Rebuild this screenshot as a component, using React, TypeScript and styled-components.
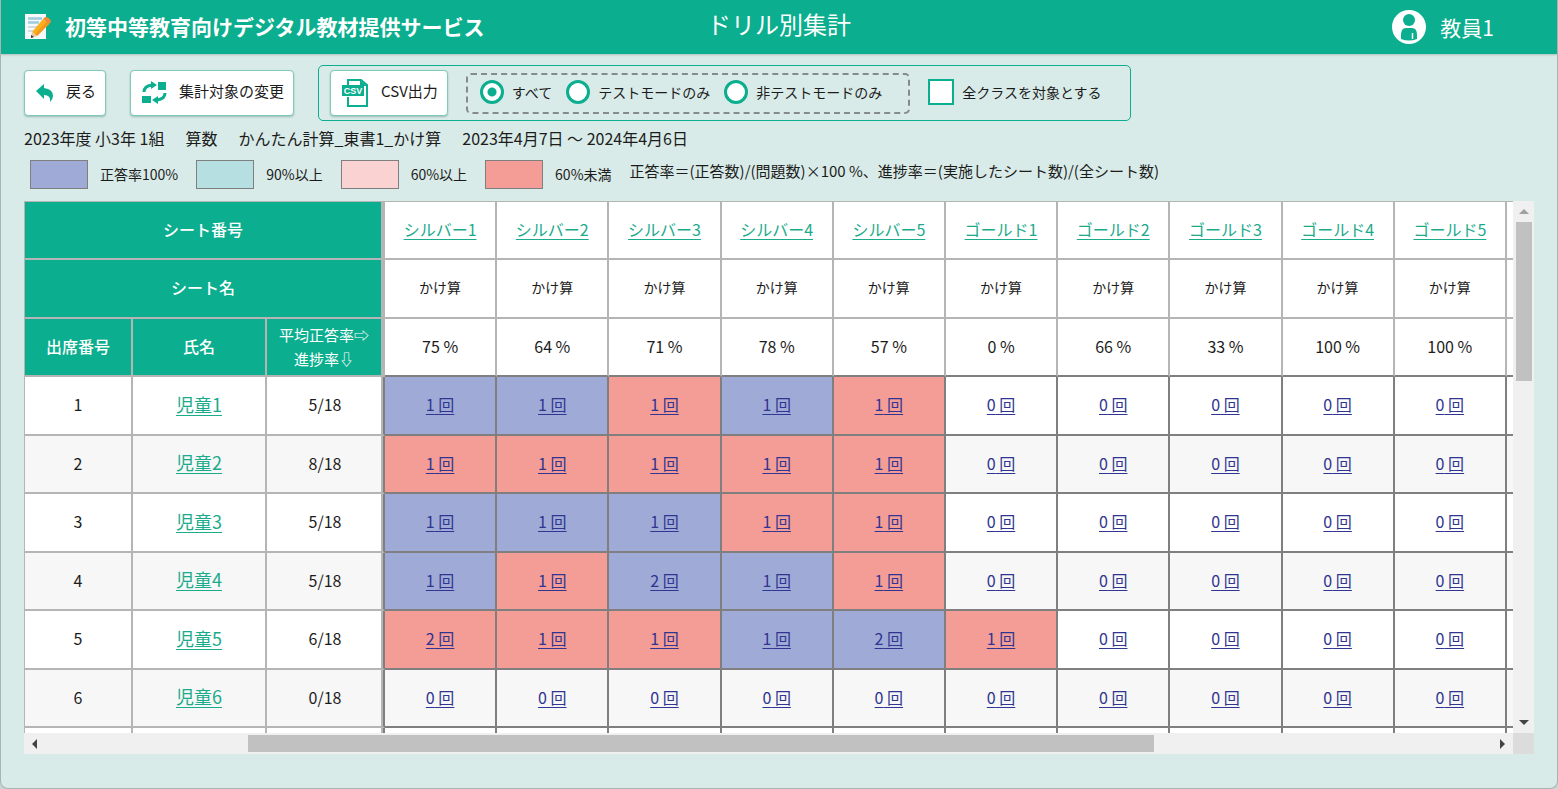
import React from "react";
import styled, { createGlobalStyle, css } from "styled-components";

const green = "#0bae8e";
const light = "#b5b5b5";
const dark = "#7f7f7f";

const Global = createGlobalStyle`
  *, *::before, *::after { box-sizing: border-box; }
  html, body { margin: 0; }
  body {
    background: #c9d6d4;
    color: #1c1c1c;
    font-family: "Noto Sans CJK JP", sans-serif;
    font-size: 16px;
    line-height: 24px;
  }
  button, input { font: inherit; color: inherit; margin: 0; }
`;

const Page = styled.div`
  height: 100vh;
  min-height: 480px;
  display: flex;
  flex-direction: column;
  background: #d9ebe8;
  border: 1px solid #a9b3b0;
  border-top: 0;
  border-radius: 0 0 8px 8px;
  overflow: hidden;
`;

const Header = styled.header`
  flex: none;
  height: 54px;
  display: grid;
  grid-template-columns: 1fr auto 1fr;
  align-items: center;
  background: ${green};
  color: #fff;
  box-shadow: 0 1px 2px rgba(0, 0, 0, 0.2);
`;

const Brand = styled.div`
  display: flex;
  align-items: center;
  gap: 14px;
  padding: 0 0 2px 23px;
  font-size: 21px;
  font-weight: 700;
  white-space: nowrap;
`;

const PageTitle = styled.h1`
  margin: 0 0 6px;
  font-size: 24px;
  line-height: 32px;
  font-weight: 400;
`;

const User = styled.div`
  justify-self: end;
  display: flex;
  align-items: center;
  gap: 14px;
  padding-right: 63px;
  font-size: 21px;
`;

const Main = styled.main`
  flex: 1;
  min-height: 0;
  display: flex;
  flex-direction: column;
  padding: 11px 23px 34px;
`;

const Toolbar = styled.div`
  display: flex;
  align-items: center;
  gap: 24px;
  font-size: 15px;
`;

const ToolButton = styled.button`
  display: flex;
  align-items: center;
  gap: 12px;
  height: 46px;
  padding: 0 9px 0 11px;
  background: #fff;
  border: 1px solid #7fcab9;
  border-radius: 4px;
  box-shadow: 0 1px 2px rgba(0, 80, 60, 0.3);
  white-space: nowrap;
`;

const ButtonLabel = styled.span`
  padding-bottom: 4px;
`;

const ExportGroup = styled.div`
  display: flex;
  align-items: center;
  gap: 18px;
  height: 56px;
  padding: 0 28px 0 11px;
  border: 1px solid ${green};
  border-radius: 5px;
`;

const ModeGroup = styled.div`
  display: flex;
  align-items: center;
  gap: 14px;
  height: 41px;
  padding: 0 26px 0 12px;
  border: 2px dashed #858b8a;
  border-radius: 5px;
`;

const Choice = styled.label`
  display: flex;
  align-items: center;
  gap: 8px;
  padding-bottom: 2px;
  font-size: 14px;
  line-height: 24px;
  white-space: nowrap;
`;

const Radio = styled.input`
  appearance: none;
  width: 24px;
  height: 24px;
  border: 3px solid ${green};
  border-radius: 50%;
  background: #fff;
  &:checked {
    background: radial-gradient(circle, ${green} 0 4px, #fff 5px);
  }
`;

const Check = styled.input`
  appearance: none;
  width: 26px;
  height: 26px;
  border: 2px solid ${green};
  background: #fff;
  &:checked { background: ${green}; }
`;

const Conditions = styled.div`
  display: flex;
  gap: 21px;
  margin-top: 5px;
  font-size: 16px;
`;

const Legend = styled.div`
  display: flex;
  align-items: center;
  gap: 18px;
  margin: 8px 0 11px;
  padding-left: 6px;
  height: 32px;
`;

const LegendItem = styled.span`
  display: flex;
  align-items: center;
  gap: 12px;
  font-size: 14px;
  white-space: nowrap;
`;

const Swatch = styled.span<{ $color: string }>`
  width: 58px;
  height: 29px;
  border: 1px solid ${dark};
  background: ${(p) => p.$color};
`;

const Formula = styled.span`
  font-size: 15px;
  white-space: nowrap;
  padding-bottom: 6px;
`;

const Viewer = styled.section`
  flex: 1;
  min-height: 0;
  display: grid;
  grid-template-columns: minmax(0, 1fr) 21px;
  grid-template-rows: minmax(0, 1fr) 21px;
`;

const TableClip = styled.div`
  overflow: hidden;
  background: #fff;
  border-top: 1px solid ${light};
  border-left: 1px solid ${light};
`;

const Table = styled.table`
  width: 100%;
  table-layout: fixed;
  border-collapse: separate;
  border-spacing: 0;
  text-align: center;
`;

const Col = styled.col<{ $w?: number }>`
  ${(p) => p.$w && css`width: ${p.$w}px;`}
`;

const Row = styled.tr<{ $tall?: boolean; $shade?: boolean }>`
  height: ${(p) => (p.$tall ? 59 : 58)}px;
  background: ${(p) => (p.$shade ? "#f7f7f7" : "#fff")};
`;

const cell = css`
  padding: 0 0 3px;
  font-weight: 400;
  border: 0 solid ${light};
  border-right-width: 2px;
  border-bottom-width: 2px;
  &:last-child { border-right-width: 0; }
`;

const HeadCell = styled.th<{ $edge?: boolean }>`
  ${cell}
  background: ${green};
  color: #fff;
  font-weight: 500;
  ${(p) => p.$edge && css`border-right-width: 4px;`}
`;

const RateHead = styled(HeadCell)`
  padding-bottom: 0;
  font-size: 15px;
  line-height: 24px;
  font-weight: 400;
`;

const SheetCell = styled.th<{ $small?: boolean; $last?: boolean }>`
  ${cell}
  font-size: ${(p) => (p.$small ? 14 : 16)}px;
  ${(p) => p.$last && css`border-bottom-color: ${dark};`}
`;

/* The edge cell carries both the light rule and the dark rule of the count grid. */
const InfoCell = styled.td<{ $edge?: boolean }>`
  ${cell}
  ${(p) =>
    p.$edge &&
    css`
      border-right-color: ${dark};
      box-shadow: inset -2px 0 0 ${light};
    `}
`;

type Level = "full" | "low" | "none";

const levelColor: Record<Level, string> = {
  full: "#9fabd6",
  low: "#f49c96",
  none: "transparent",
};

const CountCell = styled.td<{ $level: Level }>`
  ${cell}
  border-color: ${dark};
  background: ${(p) => levelColor[p.$level]};
`;

const Link = styled.a<{ $kind: "sheet" | "pupil" | "count" }>`
  color: ${(p) => (p.$kind === "count" ? "#2f3590" : "#1bab8b")};
  font-size: ${(p) => (p.$kind === "pupil" ? 18 : 16)}px;
  text-decoration: underline;
  text-decoration-thickness: 1px;
  text-underline-offset: 3px;
`;

const Bar = styled.div<{ $vertical?: boolean }>`
  display: grid;
  background: #f0f0f0;
  ${(p) =>
    p.$vertical
      ? css`grid-template-rows: 21px 159fr 331fr 21px; padding: 0 2px 0 3px;`
      : css`grid-template-columns: 21px 203fr 906fr 338fr 21px; padding: 2px 0;`}
`;

const Thumb = styled.div<{ $vertical?: boolean }>`
  background: #c1c1c1;
  ${(p) => (p.$vertical ? css`grid-row: 2;` : css`grid-column: 3;`)}
`;

const Arrow = styled.button<{ $end?: boolean; $vertical?: boolean }>`
  display: grid;
  place-items: center;
  padding: 0;
  border: 0;
  background: none;
  ${(p) => p.$end && (p.$vertical ? css`grid-row: 4;` : css`grid-column: 5;`)}
`;

const Corner = styled.div`
  background: #dcdcdc;
`;

const MemoIcon = () => (
  <svg width="27" height="28" viewBox="0 0 27 28" aria-hidden="true">
    <rect x="1" y="2" width="21" height="25" fill="#f6f8fa" />
    <path d="M4 6.500h14M4 10.500h11" stroke="#9fcbe0" strokeWidth="2.500" />
    <path d="M4 15h9M4 19h5" stroke="#d3dbe0" strokeWidth="2" />
    <path d="M8 20 19 7l6 5-12 12z" fill="#fbb11f" />
    <path d="m11 22 12-13 2 3-12 12z" fill="#f29a1c" />
    <path d="m19 7 2-2q5 0 6 5l-2 2z" fill="#f08c34" />
    <path d="m8 20 5 4-6 2z" fill="#e8c9a0" />
    <path d="m7 23 3 2-3 1z" fill="#333" />
  </svg>
);

const UserIcon = () => (
  <svg width="34" height="34" viewBox="0 0 34 34" aria-hidden="true">
    <circle cx="17" cy="17" r="17" fill="#fff" />
    <circle cx="17" cy="10" r="6" fill={green} />
    <path d="M9 29v-4q0-7 5-7h6q5 0 5 7v4q-8 3-16 0z" fill={green} />
    <path d="M20.500 23v6" stroke="#fff" strokeWidth="1.500" />
  </svg>
);

const BackIcon = () => (
  <svg width="18" height="18" viewBox="0 0 18 18" aria-hidden="true">
    <path d="M0 7 8 0v4q9 1 9 8 0 3-3 6 1-7-6-7v4z" fill={green} />
  </svg>
);

const SwapIcon = () => (
  <svg width="25" height="24" viewBox="0 0 25 24" aria-hidden="true">
    <path d="M16 1h8v8h-8zM0 15h9v7H0z" fill={green} />
    <path d="M2 11q0-6 8-7" fill="none" stroke={green} strokeWidth="3" />
    <path d="m9 0 6 4-6 4zM16 15v8l-6-4z" fill={green} />
    <path d="M23 12q0 6-8 7" fill="none" stroke={green} strokeWidth="3" />
  </svg>
);

const CsvIcon = () => (
  <svg width="27" height="28" viewBox="0 0 27 28" aria-hidden="true">
    <path d="M6 7V1h13l6 5v21H6v-9" fill="none" stroke={green} strokeWidth="2" />
    <path d="M18 1v6h7z" fill={green} />
    <rect x="0" y="6" width="22" height="11" fill={green} />
    <text x="11" y="15" textAnchor="middle" fontFamily="Liberation Sans, sans-serif" fontSize="9" fontWeight="700" fill="#fff">CSV</text>
  </svg>
);

const arrows = {
  up: "M0 5 5 0l5 5z",
  down: "M0 0h10L5 5z",
  left: "M5 0v10L0 5z",
  right: "M0 0v10l5-5z",
};

const Tri = ({ dir, color = "#444" }: { dir: keyof typeof arrows; color?: string }) => {
  const upright = dir === "up" || dir === "down";
  return (
    <svg width={upright ? 10 : 5} height={upright ? 5 : 10} aria-hidden="true">
      <path d={arrows[dir]} fill={color} />
    </svg>
  );
};

const legend = [
  ["正答率100%", "#9fabd6"],
  ["90%以上", "#b5dfe1"],
  ["60%以上", "#fad2d1"],
  ["60%未満", "#f49c96"],
];

const sheets = [
  ["シルバー1", 75], ["シルバー2", 64], ["シルバー3", 71], ["シルバー4", 78], ["シルバー5", 57],
  ["ゴールド1", 0], ["ゴールド2", 66], ["ゴールド3", 33], ["ゴールド4", 100], ["ゴールド5", 100],
] as const;

/* One letter per sheet: f = 100 %, l = below 60 %, n = not attempted. */
const pupils = [
  { done: 5, counts: "1111100000", levels: "fflflnnnnn" },
  { done: 8, counts: "1111100000", levels: "lllllnnnnn" },
  { done: 5, counts: "1111100000", levels: "fffllnnnnn" },
  { done: 5, counts: "1121100000", levels: "flfflnnnnn" },
  { done: 6, counts: "2111210000", levels: "lllfflnnnn" },
  { done: 0, counts: "0000000000", levels: "nnnnnnnnnn" },
];

const levelOf: Record<string, Level> = { f: "full", l: "low", n: "none" };

export default function App() {
  return (
    <>
      <Global />
      <Page>
        <Header>
          <Brand><MemoIcon />初等中等教育向けデジタル教材提供サービス</Brand>
          <PageTitle>ドリル別集計</PageTitle>
          <User><UserIcon />教員1</User>
        </Header>
        <Main>
          <Toolbar>
            <ToolButton><BackIcon /><ButtonLabel>戻る</ButtonLabel></ToolButton>
            <ToolButton><SwapIcon /><ButtonLabel>集計対象の変更</ButtonLabel></ToolButton>
            <ExportGroup>
              <ToolButton><CsvIcon /><ButtonLabel>CSV出力</ButtonLabel></ToolButton>
              <ModeGroup role="radiogroup" aria-label="モード">
                <Choice><Radio type="radio" name="mode" defaultChecked />すべて</Choice>
                <Choice><Radio type="radio" name="mode" />テストモードのみ</Choice>
                <Choice><Radio type="radio" name="mode" />非テストモードのみ</Choice>
              </ModeGroup>
              <Choice><Check type="checkbox" />全クラスを対象とする</Choice>
            </ExportGroup>
          </Toolbar>
          <Conditions>
            <span>2023年度 小3年 1組</span>
            <span>算数</span>
            <span>かんたん計算_東書1_かけ算</span>
            <span>2023年4月7日 ～ 2024年4月6日</span>
          </Conditions>
          <Legend>
            {legend.map(([label, color]) => (
              <LegendItem key={label}><Swatch $color={color} />{label}</LegendItem>
            ))}
            <Formula>正答率＝(正答数)/(問題数)×100 %、進捗率＝(実施したシート数)/(全シート数)</Formula>
          </Legend>
          <Viewer>
            <TableClip>
              <Table>
                <colgroup>
                  <Col $w={108} /><Col $w={134} /><Col $w={118} />
                  {sheets.map(([name]) => <Col key={name} />)}
                  <Col $w={6} />
                </colgroup>
                <thead>
                  <Row>
                    <HeadCell colSpan={3} $edge>シート番号</HeadCell>
                    {sheets.map(([name]) => (
                      <SheetCell key={name}><Link $kind="sheet" href="#sheet">{name}</Link></SheetCell>
                    ))}
                    <SheetCell />
                  </Row>
                  <Row $tall>
                    <HeadCell colSpan={3} $edge>シート名</HeadCell>
                    {sheets.map(([name]) => <SheetCell key={name} $small>かけ算</SheetCell>)}
                    <SheetCell />
                  </Row>
                  <Row>
                    <HeadCell>出席番号</HeadCell>
                    <HeadCell>氏名</HeadCell>
                    <RateHead $edge>平均正答率⇨<br />進捗率⇩</RateHead>
                    {sheets.map(([name, rate]) => <SheetCell key={name} $last>{rate} %</SheetCell>)}
                    <SheetCell $last />
                  </Row>
                </thead>
                <tbody>
                  {pupils.map((p, r) => (
                    <Row key={r} $tall={r % 2 === 0} $shade={r % 2 === 1}>
                      <InfoCell>{r + 1}</InfoCell>
                      <InfoCell><Link $kind="pupil" href="#pupil">児童{r + 1}</Link></InfoCell>
                      <InfoCell $edge>{p.done}/18</InfoCell>
                      {sheets.map(([name], i) => (
                        <CountCell key={name} $level={levelOf[p.levels[i]]}>
                          <Link $kind="count" href="#result">{p.counts[i]} 回</Link>
                        </CountCell>
                      ))}
                      <CountCell $level="none" />
                    </Row>
                  ))}
                  <Row $tall>
                    <InfoCell /><InfoCell /><InfoCell $edge />
                    {sheets.map(([name]) => <CountCell key={name} $level="none" />)}
                    <CountCell $level="none" />
                  </Row>
                </tbody>
              </Table>
            </TableClip>
            <Bar $vertical>
              <Arrow aria-label="上へ"><Tri dir="up" color="#a0a0a0" /></Arrow>
              <Thumb $vertical />
              <Arrow $vertical $end aria-label="下へ"><Tri dir="down" /></Arrow>
            </Bar>
            <Bar>
              <Arrow aria-label="左へ"><Tri dir="left" /></Arrow>
              <Thumb />
              <Arrow $end aria-label="右へ"><Tri dir="right" /></Arrow>
            </Bar>
            <Corner />
          </Viewer>
        </Main>
      </Page>
    </>
  );
}
